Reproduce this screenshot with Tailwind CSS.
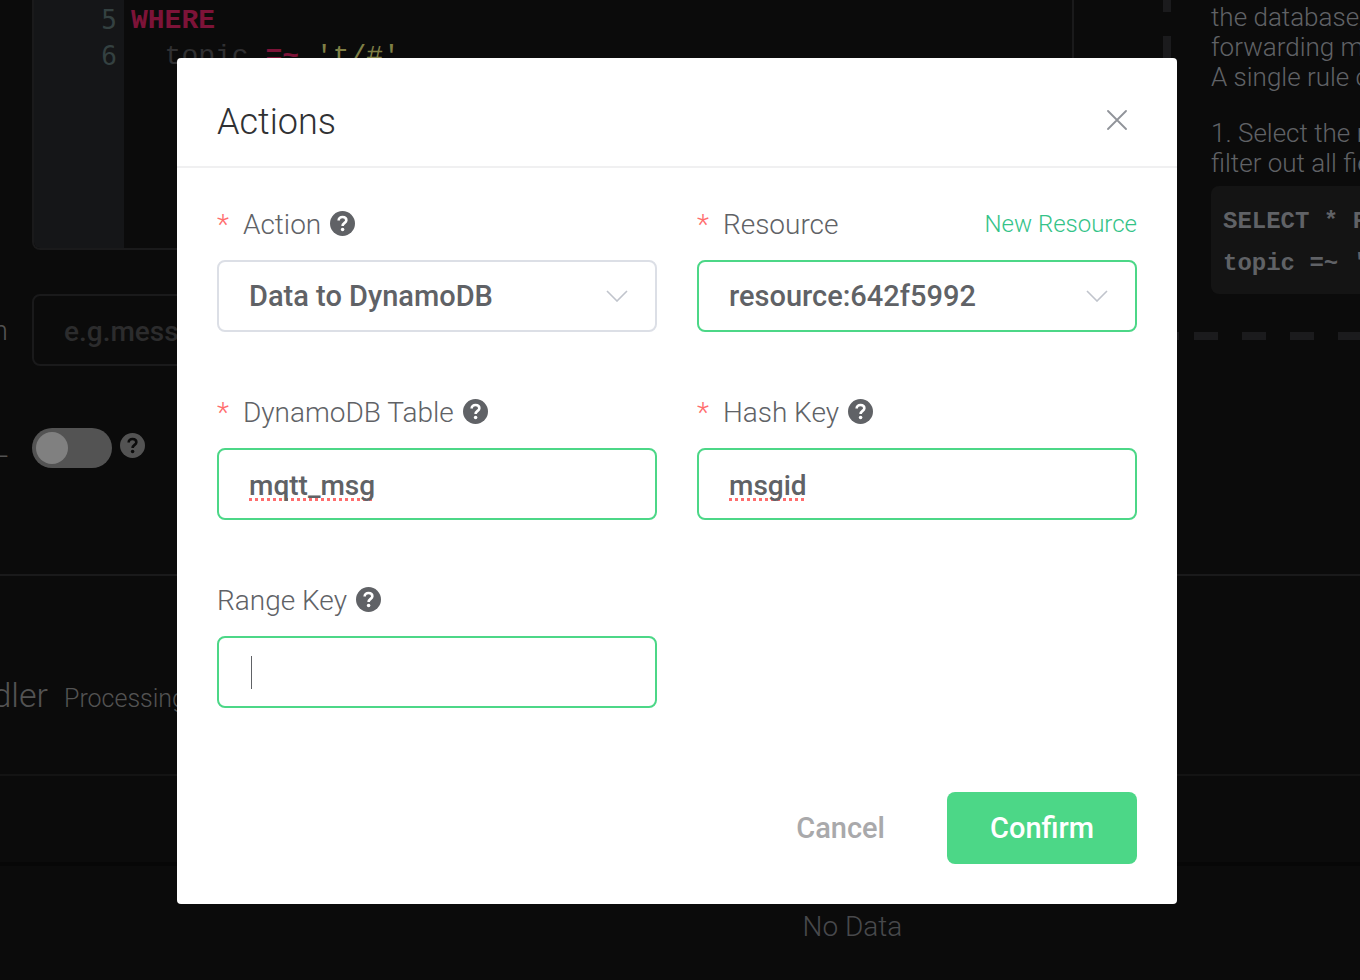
<!DOCTYPE html>
<html lang="en">
<head>
  <meta charset="UTF-8" />
  <meta name="viewport" content="width=device-width, initial-scale=1.0" />
  <title>Rule Engine - Actions</title>
  <script src="https://cdn.jsdelivr.net/npm/@tailwindcss/browser@4"></script>
</head>
<body class="h-screen overflow-hidden bg-[#0b0b0b] font-['Roboto',sans-serif] font-light text-[28px]">

<svg class="hidden">
  <symbol id="help" viewBox="0 0 24 24">
    <circle cx="12" cy="12" r="12" fill="currentColor" />
    <path d="M8.3 9.2C8.3 6.9 9.9 5.7 12 5.7s3.7 1.2 3.7 3.1c0 2.6-3.6 2.6-3.6 5.6" fill="none" stroke="var(--mark)" stroke-width="2.5" />
    <circle cx="12.1" cy="17.8" r="1.7" fill="var(--mark)" />
  </symbol>
  <symbol id="chevron" viewBox="0 0 22 12">
    <path d="M1 1l10 10L21 1" fill="none" stroke="currentColor" stroke-width="1.6" />
  </symbol>
</svg>

<!-- Rule page -->
<main class="[--mark:#0b0b0b]">
  <section class="flex h-[576px] border-b-2 border-[#1a1a1b]">
    <div class="flex-1">
      <div class="ml-8 flex h-[250px] overflow-hidden rounded-b-lg border-x-2 border-b-2 border-[#1a1a1b] leading-9">
        <div class="w-[90px] bg-[#151618] pt-[2px] pr-[7px] text-right font-['DejaVu_Sans_Mono',monospace] text-[26px] font-normal text-[#344141]">
          <div>5</div>
          <div>6</div>
        </div>
        <pre class="pt-[3px] pl-[7px] font-['Liberation_Mono',monospace] font-normal text-[#303032]"><span class="font-bold text-[#7d1338]">WHERE</span>
  topic <span class="font-bold text-[#7d1338]">=~</span> <span class="text-[#7f7f45]">'t/#'</span></pre>
      </div>

      <div class="mt-11 flex items-center">
        <label for="note" class="flex w-8 justify-end overflow-hidden pt-0.5 pr-6 text-[#535353]"><span>n</span></label>
        <input id="note" type="text" placeholder="e.g.message" class="h-[72px] flex-1 rounded-lg border-2 border-[#1a1a1b] bg-transparent px-[30px] pt-0.5 font-medium outline-none placeholder:text-[#2c2c2d]" />
      </div>

      <div class="mt-[62px] flex items-start">
        <label for="enable" class="flex h-10 w-8 items-center justify-end overflow-hidden pr-6 text-[#535353]"><span>L</span></label>
        <input id="enable" type="checkbox" class="h-10 w-20 appearance-none rounded-full bg-[#535353] p-1 before:block before:size-8 before:rounded-full before:bg-[#808080] before:content-['']" />
        <svg class="mt-[5px] ml-2 size-[25px] text-[#535353]"><use href="#help" /></svg>
      </div>
    </div>

    <!-- Help card with dashed frame -->
    <aside class="ml-[89px] flex h-[340px] w-[197px] flex-col overflow-hidden text-[26px] leading-[30px] whitespace-nowrap text-[#606266]">
      <div class="flex flex-1">
        <div class="w-2 shrink-0 bg-[repeating-linear-gradient(to_bottom,#1b1b1d_0_12px,transparent_12px_36px,#1b1b1d_36px_48px)]"></div>
        <div class="ml-10 pt-[2px]">
          <p>the database,<br />forwarding messages<br />A single rule can</p>
          <p class="mt-[26px]">1. Select the messages<br />filter out all fields</p>
          <pre class="mt-2 w-[400px] rounded-lg bg-[#141414] px-3 pt-[15px] pb-[9px] font-['Liberation_Mono',monospace] text-[24px] font-bold leading-[42px]">SELECT * FROM
topic =~ 't/#'</pre>
        </div>
      </div>
      <div class="flex h-2 gap-[15px]">
        <div class="w-4 bg-[#1b1b1d]"></div>
        <div class="flex-1 bg-[repeating-linear-gradient(to_right,#1b1b1d_0_24px,transparent_24px_48px)]"></div>
      </div>
    </aside>
  </section>

  <section>
    <div class="flex h-[200px] items-baseline border-b-2 border-[#141414] pt-[94px] text-[#535353]">
      <h2 class="flex w-12 justify-end overflow-hidden text-[34px]"><span>dler</span></h2>
      <p class="ml-4 text-[25px]">Processing</p>
    </div>
    <div class="h-[90px] border-b-4 border-[#070707]"></div>
    <p class="pt-10 pl-[345px] text-center text-[#48494c]">No Data</p>
  </section>
</main>

<!-- Actions dialog -->
<div class="fixed inset-0 flex items-start justify-center pt-[58px] pr-[6px] [--mark:#fff]">
  <div role="dialog" aria-labelledby="dialog-title" class="w-full max-w-[1000px] rounded-[4px] bg-white text-[#606266]">
    <header class="flex items-center justify-between border-b-2 border-[#f0f0f1] pt-9 pr-[50px] pb-4 pl-10">
      <h1 id="dialog-title" class="text-[36px] leading-[56px] text-[#303133]">Actions</h1>
      <button type="button" aria-label="Close" class="mb-1 text-[#909399]">
        <svg class="size-5" viewBox="0 0 20 20"><path d="M1 1l18 18M19 1L1 19" stroke="currentColor" stroke-width="1.8" stroke-linecap="round" /></svg>
      </button>
    </header>

    <form class="px-10 pt-9 pb-10">
      <div class="grid grid-cols-2 gap-x-10 gap-y-[60px]">
        <div>
          <div class="mb-4 flex h-10 items-center">
            <label for="action" class="pt-0.5"><span class="mr-[14px] text-[#ff6d6d]">*</span>Action</label>
            <svg class="mb-0.5 ml-[9px] size-[25px]"><use href="#help" /></svg>
          </div>
          <div class="relative">
            <select id="action" class="h-[72px] w-full appearance-none rounded-lg border-2 border-[#dcdfe6] bg-white px-[30px] pt-0.5 text-[29px] font-medium outline-none">
              <option>Data to DynamoDB</option>
            </select>
            <svg class="pointer-events-none absolute top-[30px] right-[29px] h-3 w-[22px] text-[#c0c4cc]"><use href="#chevron" /></svg>
          </div>
        </div>

        <div>
          <div class="mb-4 flex h-10 items-center justify-between">
            <label for="resource" class="pt-0.5"><span class="mr-[14px] text-[#ff6d6d]">*</span>Resource</label>
            <a href="#" class="text-[24px] text-[#34c388]">New Resource</a>
          </div>
          <div class="relative">
            <select id="resource" class="h-[72px] w-full appearance-none rounded-lg border-2 border-[#4cd787] bg-white px-[30px] pt-0.5 text-[29px] font-medium outline-none">
              <option>resource:642f5992</option>
            </select>
            <svg class="pointer-events-none absolute top-[30px] right-[29px] h-3 w-[22px] text-[#c0c4cc]"><use href="#chevron" /></svg>
          </div>
        </div>

        <div>
          <div class="mb-4 flex h-10 items-center">
            <label for="table" class="pt-0.5"><span class="mr-[14px] text-[#ff6d6d]">*</span>DynamoDB Table</label>
            <svg class="mb-0.5 ml-[9px] size-[25px]"><use href="#help" /></svg>
          </div>
          <input id="table" type="text" value="mqtt_msg" class="h-[72px] w-full rounded-lg border-2 border-[#4cd787] px-[30px] pt-0.5 font-medium underline decoration-[#ff6d6d] decoration-dotted decoration-[3px] underline-offset-[3px] outline-none [text-decoration-skip-ink:none]" />
        </div>

        <div>
          <div class="mb-4 flex h-10 items-center">
            <label for="hash" class="pt-0.5"><span class="mr-[14px] text-[#ff6d6d]">*</span>Hash Key</label>
            <svg class="mb-0.5 ml-[9px] size-[25px]"><use href="#help" /></svg>
          </div>
          <input id="hash" type="text" value="msgid" class="h-[72px] w-full rounded-lg border-2 border-[#4cd787] px-[30px] pt-0.5 font-medium underline decoration-[#ff6d6d] decoration-dotted decoration-[3px] underline-offset-[3px] outline-none [text-decoration-skip-ink:none]" />
        </div>

        <div>
          <div class="mb-4 flex h-10 items-center">
            <label for="range" class="pt-0.5">Range Key</label>
            <svg class="mb-0.5 ml-[9px] size-[25px]"><use href="#help" /></svg>
          </div>
          <div class="relative">
            <input id="range" type="text" class="h-[72px] w-full rounded-lg border-2 border-[#4cd787] px-[30px] pt-0.5 font-medium outline-none" />
            <span class="absolute top-5 left-[34px] h-[33px] w-px bg-[#606266]"></span>
          </div>
        </div>
      </div>

      <div class="mt-[84px] flex justify-end gap-[62px] text-[29px] font-medium">
        <button type="button" class="pt-0.5 text-[#a9a9ab]">Cancel</button>
        <button type="submit" class="h-[72px] w-[190px] rounded-lg bg-[#4cd787] pt-0.5 text-white">Confirm</button>
      </div>
    </form>
  </div>
</div>

</body>
</html>
